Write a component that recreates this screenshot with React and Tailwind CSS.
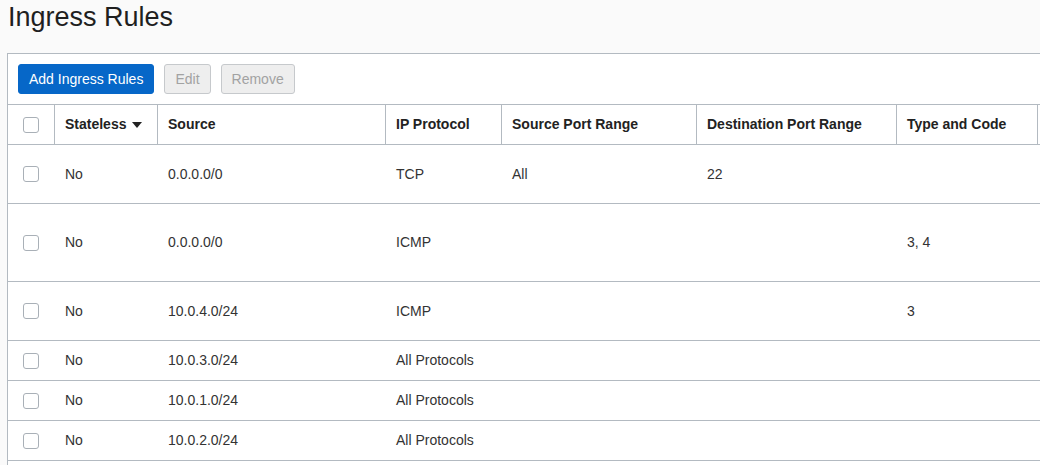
import React from 'react';

const cols = 'grid grid-cols-[46px_103px_228px_116px_195px_200px_141px_260px]';

const rows = [
  { src: '0.0.0.0/0', proto: 'TCP', srcPort: 'All', dstPort: '22', type: '', h: 'h-[59px]' },
  { src: '0.0.0.0/0', proto: 'ICMP', srcPort: '', dstPort: '', type: '3, 4', h: 'h-[78px]' },
  { src: '10.0.4.0/24', proto: 'ICMP', srcPort: '', dstPort: '', type: '3', h: 'h-[59px]' },
  { src: '10.0.3.0/24', proto: 'All Protocols', srcPort: '', dstPort: '', type: '', h: 'h-[40px]' },
  { src: '10.0.1.0/24', proto: 'All Protocols', srcPort: '', dstPort: '', type: '', h: 'h-[40px]' },
  { src: '10.0.2.0/24', proto: 'All Protocols', srcPort: '', dstPort: '', type: '', h: 'h-[40px]' },
  { src: '', proto: '', srcPort: '', dstPort: '', type: '', h: 'h-[40px]' },
];

function Checkbox() {
  return <span className="block w-4 h-4 rounded-[3px] border border-[#a9b0b7] bg-white" />;
}

function HeadCell({ children, first }) {
  return (
    <div className={`flex items-center px-[10px] ${first ? 'pl-[15px]' : 'border-l border-[#b3bac1]'}`}>
      {children}
    </div>
  );
}

function Cell({ children, first }) {
  return (
    <div className={`flex items-center px-[10px] ${first ? 'pl-[15px]' : 'border-l border-transparent'}`}>
      {children}
    </div>
  );
}

export default function App() {
  return (
    <div
      className="w-[1040px] h-[465px] overflow-hidden bg-[#fafafa] text-[#333]"
      style={{ fontFamily: '"Liberation Sans", Arial, sans-serif' }}
    >
      <h1 className="pl-[8px] pt-[4px] text-[27px] leading-[27px] font-normal text-[#1f1f1f]">Ingress Rules</h1>

      {/* panel */}
      <div className="mt-[22px] ml-[7px] w-[1200px] border border-[#b3bac1] bg-white">
        <div className="flex gap-[10px] p-[10px] text-[14px]">
          <button className="h-[30px] px-[10px] rounded-[3px] border border-[#0667c8] bg-[#0667c8] text-white">
            Add Ingress Rules
          </button>
          <button className="h-[30px] px-[10px] rounded-[3px] border border-[#c6c9cc] bg-[#eeeeee] text-[#a2a2a2]">
            Edit
          </button>
          <button className="h-[30px] px-[10px] rounded-[3px] border border-[#c6c9cc] bg-[#eeeeee] text-[#a2a2a2]">
            Remove
          </button>
        </div>

        {/* header */}
        <div className={`${cols} h-[41px] border-y border-[#b3bac1] text-[14px] font-bold text-[#222]`}>
          <HeadCell first><Checkbox /></HeadCell>
          <HeadCell>
            Stateless
            <svg className="ml-[6px]" width="10" height="6" viewBox="0 0 10 6">
              <path d="M0 0 H10 L5 6 Z" fill="#222" />
            </svg>
          </HeadCell>
          <HeadCell>Source</HeadCell>
          <HeadCell>IP Protocol</HeadCell>
          <HeadCell>Source Port Range</HeadCell>
          <HeadCell>Destination Port Range</HeadCell>
          <HeadCell>Type and Code</HeadCell>
          <HeadCell></HeadCell>
        </div>

        {rows.map((r, i) => (
          <div key={i} className={`${cols} ${r.h} border-b border-[#b3bac1] text-[14px]`}>
            <Cell first>{r.src && <Checkbox />}</Cell>
            <Cell>{r.src && 'No'}</Cell>
            <Cell>{r.src}</Cell>
            <Cell>{r.proto}</Cell>
            <Cell>{r.srcPort}</Cell>
            <Cell>{r.dstPort}</Cell>
            <Cell>{r.type}</Cell>
            <Cell></Cell>
          </div>
        ))}
      </div>
    </div>
  );
}
